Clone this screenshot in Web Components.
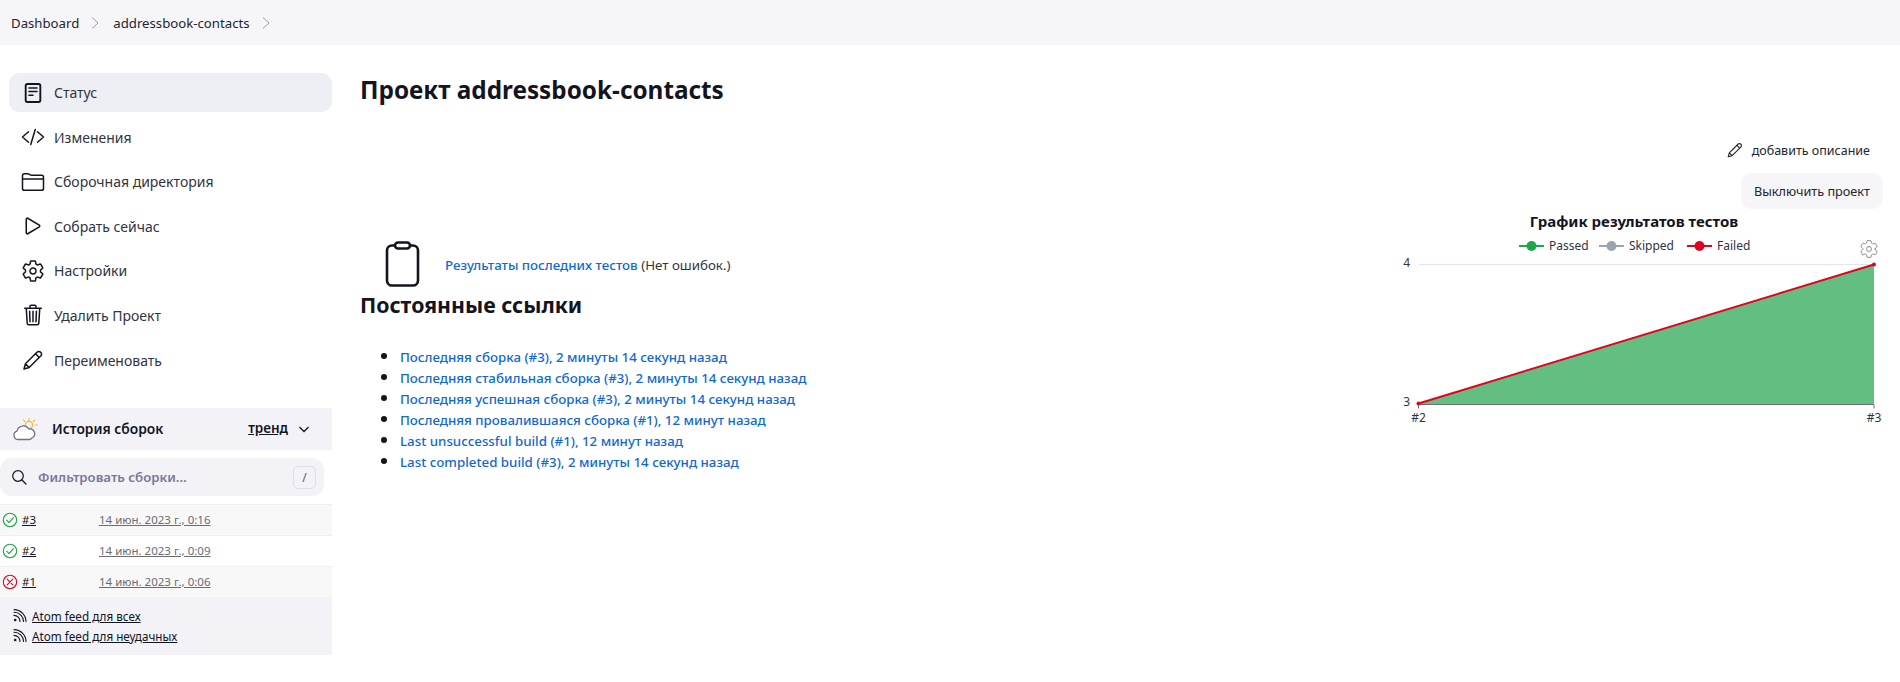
<!DOCTYPE html>
<html lang="ru">
<head>
<meta charset="utf-8">
<title>addressbook-contacts</title>
<style>
  html, body { margin: 0; padding: 0; background: #fff; }
  body { font-family: "Noto Sans", Inter, sans-serif; font-size: 14px; color: #14141f; }
</style>
</head>
<body>
<app-breadcrumbs></app-breadcrumbs>
<div style="display:flex;align-items:flex-start">
  <app-sidebar></app-sidebar>
  <project-main></project-main>
</div>

<script>
const ICONS = {
  status: `<rect x="100" y="64" width="312" height="384" rx="36" stroke-width="40"/><path d="M170 150h172M170 226h172M170 302h86"/>`,
  code: `<path d="M160 368L32 256l128-112M352 368l128-112-128-112M304 96l-96 320"/>`,
  folder: `<path d="M440 432H72a40 40 0 01-40-40V120a40 40 0 0140-40h75.89a40 40 0 0122.19 6.72l27.84 18.56a40 40 0 0022.19 6.72H440a40 40 0 0140 40v240a40 40 0 01-40 40zM32 192h448"/>`,
  play: `<path d="M112 111v290c0 17.44 17 28.52 31 20.16l247.9-148.37c12.12-7.25 12.12-26.33 0-33.58L143 90.84c-14-8.36-31 2.72-31 20.16z"/>`,
  gear: `<path d="M262.29 192.31a64 64 0 1057.4 57.4 64.13 64.13 0 00-57.4-57.4zM416.39 256a154.34 154.34 0 01-1.53 20.79l45.21 35.46a10.81 10.81 0 012.45 13.75l-42.77 74a10.81 10.81 0 01-13.14 4.59l-44.9-18.08a16.11 16.11 0 00-15.17 1.75A164.48 164.48 0 01325 400.8a15.94 15.94 0 00-8.82 12.14l-6.73 47.89a11.08 11.08 0 01-10.68 9.17h-85.54a11.11 11.11 0 01-10.69-8.87l-6.72-47.82a16.07 16.07 0 00-9-12.22 155.3 155.3 0 01-21.46-12.57 16 16 0 00-15.11-1.71l-44.89 18.07a10.81 10.81 0 01-13.14-4.58l-42.77-74a10.8 10.8 0 012.45-13.75l38.21-30a16.05 16.05 0 006-14.08c-.36-4.17-.58-8.33-.58-12.5s.21-8.27.58-12.35a16 16 0 00-6.07-13.94l-38.19-30A10.81 10.81 0 0149.48 186l42.77-74a10.81 10.81 0 0113.14-4.59l44.9 18.08a16.11 16.11 0 0015.17-1.75A164.48 164.48 0 01187 111.2a15.94 15.94 0 008.82-12.14l6.73-47.89A11.08 11.08 0 01213.23 42h85.54a11.11 11.11 0 0110.69 8.87l6.72 47.82a16.07 16.07 0 009 12.22 155.3 155.3 0 0121.46 12.57 16 16 0 0015.11 1.71l44.89-18.07a10.81 10.81 0 0113.14 4.58l42.77 74a10.8 10.8 0 01-2.45 13.75l-38.21 30a16.05 16.05 0 00-6.05 14.08c.33 4.14.55 8.3.55 12.47z"/>`,
  trash: `<path d="M112 112l20 320c.95 18.49 14.4 32 32 32h184c17.67 0 30.87-13.51 32-32l20-320M80 112h352M192 112V72a23.93 23.93 0 0124-24h80a23.93 23.93 0 0124 24v40M256 176v224M184 176l8 224M328 176l-8 224"/>`,
  pencil: `<path d="M64 448l30-110L340 92a52 52 0 0180 0 52 52 0 010 80L174 418zM94 338l80 80M310 122l80 80"/>`
};

function icon(name, size, weight = 32) {
  return `<svg width="${size}" height="${size}" viewBox="0 0 512 512" fill="none" stroke="currentColor" stroke-width="${weight}" stroke-linecap="round" stroke-linejoin="round" aria-hidden="true">${ICONS[name]}</svg>`;
}

class AppBreadcrumbs extends HTMLElement {
  constructor() {
    super();
    const chevron = `<svg width="10" height="14" viewBox="0 0 10 14" fill="none" stroke="#9a9aa6" stroke-width="1" aria-hidden="true"><path d="M2 1.5l6 5.5-6 5.5"/></svg>`;
    this.attachShadow({ mode: "open" }).innerHTML = `
      <style>
        :host { display: flex; align-items: center; height: 45px; padding-left: 11px; background: #f6f6f8; font-size: 13.2px; color: #24242f; }
        svg { margin-left: 11px; margin-right: 13px; }
      </style>
      <span>Dashboard</span>${chevron}<span>addressbook-contacts</span>${chevron}`;
  }
}

class SideTask extends HTMLElement {
  constructor() {
    super();
    this.attachShadow({ mode: "open" }).innerHTML = `
      <style>
        :host { display: flex; align-items: center; height: 39px; margin-bottom: 5.6px; padding-left: 12px; border-radius: 10px; color: #33333f; font-size: 14px; }
        :host([active]) { background: #eeeff4; }
        .ico { width: 24px; height: 24px; margin-right: 9px; color: #14141f; display: flex; }
      </style>
      <span class="ico">${icon(this.getAttribute("icon"), 24)}</span><slot></slot>`;
  }
}

class BuildRow extends HTMLElement {
  constructor() {
    super();
    const ok = this.getAttribute("status") === "ok";
    const color = ok ? "#1ea64b" : "#e6001f";
    const mark = ok
      ? `<path d="M4.6 8.2l2.4 2.4 4.4-5" />`
      : `<path d="M5.2 5.2l5.6 5.6M10.8 5.2l-5.6 5.6" />`;
    this.attachShadow({ mode: "open" }).innerHTML = `
      <style>
        :host { display: flex; align-items: center; height: 31px; padding-bottom: 2px; font-size: 11.5px; border-top: 1px solid #f0f0f3; box-sizing: border-box; }
        :host([shade]) { background: #f8f8f8; }
        svg { margin-left: 2px; margin-right: 4px; flex: none; position: relative; top: 1px; }
        .num { width: 77px; color: #14141f; text-decoration: underline; }
        .date { color: #6b6b73; text-decoration: underline; }
      </style>
      <svg width="16" height="16" viewBox="0 0 16 16" fill="none" stroke="${color}" stroke-width="1.1" stroke-linecap="round" stroke-linejoin="round" aria-hidden="true"><circle cx="8" cy="8" r="6.7"/>${mark}</svg>
      <span class="num">${this.getAttribute("num")}</span><span class="date">${this.getAttribute("date")}</span>`;
  }
}

class BuildHistory extends HTMLElement {
  constructor() {
    super();
    const rss = `<svg width="14" height="14" viewBox="0 0 14 14" fill="none" stroke="#14141f" stroke-width="1.1" stroke-linecap="round" aria-hidden="true"><circle cx="2.2" cy="11" r="1.3" fill="#14141f" stroke="none"/><path d="M1 6.4a6 6 0 0 1 6 6M1 3.2a9.3 9.3 0 0 1 9.5 9.2M1 .6a12 12 0 0 1 12 12" /></svg>`;
    this.attachShadow({ mode: "open" }).innerHTML = `
      <style>
        :host { display: block; font-size: 11.7px; }
        .head { display: flex; align-items: center; height: 42px; background: #f2f2f7; padding-left: 12px; box-sizing: border-box; }
        .title { margin-left: 14px; font-size: 13.8px; font-weight: 600; margin-bottom: 2px; }
        .trend { margin-left: auto; font-size: 13.5px; font-weight: 600; text-decoration: underline; margin-bottom: 2px; }
        .arrow { margin: 0 22px 0 10px; }
        .filter { display: flex; align-items: center; height: 38px; width: 324px; margin: 8px 0; background: #f2f2f7; border-radius: 12px; color: #7a7896; font-size: 13.2px; font-weight: 600; box-sizing: border-box; padding: 0 8px 0 11px; }
        .filter svg { margin-right: 11px; }
        kbd { margin-left: auto; width: 21px; height: 21px; border: 1px solid #dedee8; border-radius: 5px; display: flex; align-items: center; justify-content: center; font: 12px "Noto Sans", sans-serif; color: #5a5a70; }
        .feed { background: #f2f2f7; height: 58px; box-sizing: border-box; padding: 9px 0 0 13px; }
        .feed div { display: flex; align-items: center; height: 20px; }
        .feed span { margin-left: 5px; text-decoration: underline; color: #14141f; }
      </style>
      <div class="head">
        <svg width="26" height="24" viewBox="0 0 26 24" fill="none" aria-hidden="true">
          <circle cx="17" cy="8" r="3.6" stroke="#f5b92e" stroke-width="1.2"/>
          <path d="M17 1.5v2M11.5 3l1.2 1.6M22.5 3l-1.2 1.6M25 8h-2" stroke="#f5b92e" stroke-width="1.2" stroke-linecap="round"/>
          <path d="M6 22.5a4.3 4.3 0 0 1-1-8.4A6.4 6.4 0 0 1 16.7 12a4.8 4.8 0 0 1 3.2 9 5 5 0 0 1-2 1.5z" fill="#fff" stroke="#70708c" stroke-width="1.3" stroke-linejoin="round"/>
        </svg>
        <span class="title">История сборок</span>
        <span class="trend">тренд</span>
        <svg class="arrow" width="12" height="12" viewBox="0 0 12 12" fill="none" stroke="#14141f" stroke-width="1.3"><path d="M1.5 4l4.5 4.5L10.5 4"/></svg>
      </div>
      <div class="filter">
        <svg width="16" height="16" viewBox="0 0 16 16" fill="none" stroke="#14141f" stroke-width="1.2" stroke-linecap="round"><circle cx="7" cy="7" r="5.3"/><path d="M11 11l4 4"/></svg>
        <span>Фильтровать сборки...</span>
        <kbd>/</kbd>
      </div>
      <slot></slot>
      <div class="feed">
        <div>${rss}<span>Atom feed для всех</span></div>
        <div>${rss}<span>Atom feed для неудачных</span></div>
      </div>`;
  }
}

class AppSidebar extends HTMLElement {
  constructor() {
    super();
    this.attachShadow({ mode: "open" }).innerHTML = `
      <style>
        :host { display: block; width: 332px; flex: none; padding-top: 28px; }
        .tasks { padding-left: 9px; height: 335px; }
      </style>
      <div class="tasks">
        <side-task active icon="status">Статус</side-task>
        <side-task icon="code">Изменения</side-task>
        <side-task icon="folder">Сборочная директория</side-task>
        <side-task icon="play">Собрать сейчас</side-task>
        <side-task icon="gear">Настройки</side-task>
        <side-task icon="trash">Удалить Проект</side-task>
        <side-task icon="pencil">Переименовать</side-task>
      </div>
      <build-history>
        <build-row shade status="ok" num="#3" date="14 июн. 2023 г., 0:16"></build-row>
        <build-row status="ok" num="#2" date="14 июн. 2023 г., 0:09"></build-row>
        <build-row shade status="fail" num="#1" date="14 июн. 2023 г., 0:06"></build-row>
      </build-history>`;
  }
}

class TestChart extends HTMLElement {
  constructor() {
    super();
    const legend = [["Passed", 139, "#1ea64b"], ["Skipped", 219, "#9aa5ae"], ["Failed", 307, "#e6001f"]]
      .map(([label, x, color]) => `
        <path d="M${x} 33h25" stroke="${color}" stroke-width="2"/>
        <circle cx="${x + 12.5}" cy="33" r="5" fill="${color}"/>
        <text x="${x + 30}" y="37" font-size="12" fill="#33333f">${label}</text>`).join("");
    this.attachShadow({ mode: "open" }).innerHTML = `
      <style>
        :host { display: block; width: 503px; height: 231px; margin-top: -6px; }
        svg { display: block; font-family: "Noto Sans", sans-serif; }
      </style>
      <svg width="503" height="231" viewBox="0 -6 503 231">
        <text x="254" y="14" text-anchor="middle" font-size="15" font-weight="700" fill="#14141f">График результатов тестов</text>
        ${legend}
        <g transform="translate(479,26)" color="#6e7079">${icon("gear", 20, 20)}</g>
        <path d="M39 51.5h455" stroke="#e0e6f1"/>
        <path d="M38.5 190.5L494 51.5V191H38.5z" fill="#62bf81"/>
        <path d="M38.5 191.5H494M38.5 191.5v4M494 191.5v4" stroke="#6e7079"/>
        <path d="M38.5 190.5L494 51.5" stroke="#e6001f" stroke-width="2"/>
        <circle cx="38.5" cy="190.5" r="2" fill="#e6001f"/>
        <circle cx="494" cy="51.5" r="2" fill="#e6001f"/>
        <text x="30" y="53.5" text-anchor="end" font-size="12" fill="#33333f">4</text>
        <text x="30" y="192.5" text-anchor="end" font-size="12" fill="#33333f">3</text>
        <text x="38.5" y="209" text-anchor="middle" font-size="12" fill="#33333f">#2</text>
        <text x="494" y="209" text-anchor="middle" font-size="12" fill="#33333f">#3</text>
      </svg>`;
  }
}

class ProjectMain extends HTMLElement {
  constructor() {
    super();
    const links = [
      "Последняя сборка (#3), 2 минуты 14 секунд назад",
      "Последняя стабильная сборка (#3), 2 минуты 14 секунд назад",
      "Последняя успешная сборка (#3), 2 минуты 14 секунд назад",
      "Последняя провалившаяся сборка (#1), 12 минут назад",
      "Last unsuccessful build (#1), 12 минут назад",
      "Last completed build (#3), 2 минуты 14 секунд назад"
    ].map(text => `<li><a>${text}</a></li>`).join("");
    this.attachShadow({ mode: "open" }).innerHTML = `
      <style>
        :host { display: block; flex: 1; min-width: 0; padding: 29px 17px 0 28px; box-sizing: border-box; }
        h1 { margin: 0; font-size: 24.3px; line-height: 32px; font-weight: 700; color: #14141f; }
        .desc { display: flex; justify-content: flex-end; align-items: center; height: 20px; margin-top: 34px; padding-right: 13px; font-size: 12.5px; color: #24242f; }
        .desc svg { margin-right: 8px; }
        .actions { display: flex; justify-content: flex-end; margin-top: 13px; }
        .btn { display: flex; align-items: center; height: 36px; padding: 0 13px; background: #f6f6f8; border-radius: 10px; font-size: 12.7px; color: #24242f; }
        .body { display: flex; justify-content: space-between; align-items: flex-start; margin-top: 4px; }
        .results { display: flex; align-items: flex-end; margin: 28px 0 0 20px; height: 46px; color: #33333f; font-size: 13.3px; }
        .results svg { margin-right: 21px; }
        .results span { margin-bottom: 13px; }
        a { color: #0f68db; font-weight: 500; }
        h2 { margin: 5px 0 0; font-size: 21.3px; line-height: 26px; font-weight: 700; color: #14141f; }
        ul { margin: 27px 0 0; padding-left: 40px; font-size: 13.3px; line-height: 21px; }
        li { height: 21.1px; }
        li::marker { font-size: 17px; color: #14141f; }
      </style>
      <h1>Проект addressbook-contacts</h1>
      <div class="desc">${icon("pencil", 18)}<span>добавить описание</span></div>
      <div class="actions"><div class="btn">Выключить проект</div></div>
      <div class="body">
        <div>
          <div class="results">
            <svg width="44" height="46" viewBox="0 0 44 46" fill="none" stroke="#14141f" stroke-width="2.6" stroke-linejoin="round" aria-hidden="true"><rect x="7" y="4.5" width="31" height="40" rx="5"/><rect x="15" y="1.5" width="15" height="6" rx="3" fill="#fff"/></svg>
            <span><a>Результаты последних тестов</a> (Нет ошибок.)</span>
          </div>
          <h2>Постоянные ссылки</h2>
          <ul>${links}</ul>
        </div>
        <test-chart></test-chart>
      </div>`;
  }
}

customElements.define("app-breadcrumbs", AppBreadcrumbs);
customElements.define("side-task", SideTask);
customElements.define("build-row", BuildRow);
customElements.define("build-history", BuildHistory);
customElements.define("app-sidebar", AppSidebar);
customElements.define("test-chart", TestChart);
customElements.define("project-main", ProjectMain);
</script>
</body>
</html>
